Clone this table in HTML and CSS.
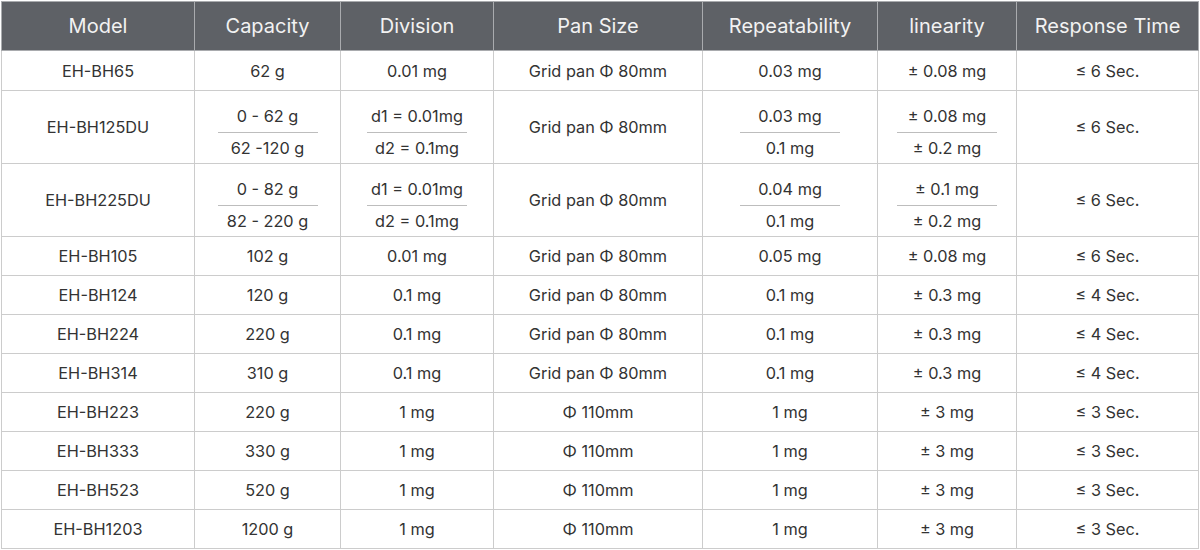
FILE: index.html
```html
<!DOCTYPE html>
<html>
<head>
<meta charset="utf-8">
<link rel="stylesheet" href="styles.css">
</head>
<body>
<table class="spec">
  <colgroup>
    <col class="c1"><col class="c2"><col class="c3"><col class="c4"><col class="c5"><col class="c6"><col class="c7">
  </colgroup>
  <thead>
    <tr><th>Model</th><th>Capacity</th><th>Division</th><th>Pan Size</th><th>Repeatability</th><th>linearity</th><th>Response Time</th></tr>
  </thead>
  <tbody>
    <tr class="r40"><td>EH-BH65</td><td>62 g</td><td>0.01 mg</td><td>Grid pan Φ 80mm</td><td>0.03 mg</td><td>± 0.08 mg</td><td>≤ 6 Sec.</td></tr>
    <tr class="r73">
      <td>EH-BH125DU</td>
      <td><div class="frac"><span class="top">0 - 62 g</span><span class="bot">62 -120 g</span></div></td>
      <td><div class="frac"><span class="top">d1 = 0.01mg</span><span class="bot">d2 = 0.1mg</span></div></td>
      <td>Grid pan Φ 80mm</td>
      <td><div class="frac"><span class="top">0.03 mg</span><span class="bot">0.1 mg</span></div></td>
      <td><div class="frac"><span class="top">± 0.08 mg</span><span class="bot">± 0.2 mg</span></div></td>
      <td>≤ 6 Sec.</td>
    </tr>
    <tr class="r73">
      <td>EH-BH225DU</td>
      <td><div class="frac"><span class="top">0 - 82 g</span><span class="bot">82 - 220 g</span></div></td>
      <td><div class="frac"><span class="top">d1 = 0.01mg</span><span class="bot">d2 = 0.1mg</span></div></td>
      <td>Grid pan Φ 80mm</td>
      <td><div class="frac"><span class="top">0.04 mg</span><span class="bot">0.1 mg</span></div></td>
      <td><div class="frac"><span class="top">± 0.1 mg</span><span class="bot">± 0.2 mg</span></div></td>
      <td>≤ 6 Sec.</td>
    </tr>
    <tr><td>EH-BH105</td><td>102 g</td><td>0.01 mg</td><td>Grid pan Φ 80mm</td><td>0.05 mg</td><td>± 0.08 mg</td><td>≤ 6 Sec.</td></tr>
    <tr><td>EH-BH124</td><td>120 g</td><td>0.1 mg</td><td>Grid pan Φ 80mm</td><td>0.1 mg</td><td>± 0.3 mg</td><td>≤ 4 Sec.</td></tr>
    <tr><td>EH-BH224</td><td>220 g</td><td>0.1 mg</td><td>Grid pan Φ 80mm</td><td>0.1 mg</td><td>± 0.3 mg</td><td>≤ 4 Sec.</td></tr>
    <tr><td>EH-BH314</td><td>310 g</td><td>0.1 mg</td><td>Grid pan Φ 80mm</td><td>0.1 mg</td><td>± 0.3 mg</td><td>≤ 4 Sec.</td></tr>
    <tr><td>EH-BH223</td><td>220 g</td><td>1 mg</td><td>Φ 110mm</td><td>1 mg</td><td>± 3 mg</td><td>≤ 3 Sec.</td></tr>
    <tr><td>EH-BH333</td><td>330 g</td><td>1 mg</td><td>Φ 110mm</td><td>1 mg</td><td>± 3 mg</td><td>≤ 3 Sec.</td></tr>
    <tr><td>EH-BH523</td><td>520 g</td><td>1 mg</td><td>Φ 110mm</td><td>1 mg</td><td>± 3 mg</td><td>≤ 3 Sec.</td></tr>
    <tr><td>EH-BH1203</td><td>1200 g</td><td>1 mg</td><td>Φ 110mm</td><td>1 mg</td><td>± 3 mg</td><td>≤ 3 Sec.</td></tr>
  </tbody>
</table>
</body>
</html>
```
FILE: styles.css
```css
html, body {
  margin: 0;
  padding: 0;
  background: #ffffff;
}
body {
  padding: 1px 0 0 1px;
  font-family: Inter, "Liberation Sans", sans-serif;
  color: #333333;
}
.spec {
  border-collapse: collapse;
  table-layout: fixed;
  width: 1197px;
}
.c1 { width: 193px; }
.c2 { width: 146px; }
.c3 { width: 153px; }
.c4 { width: 209px; }
.c5 { width: 175px; }
.c6 { width: 139px; }
.c7 { width: 182px; }
.spec th, .spec td {
  border: 1px solid #cccccc;
  text-align: center;
  vertical-align: middle;
  padding: 0;
}
.spec th {
  background: #5e6166;
  color: #f2f2f2;
  font-weight: 400;
  font-size: 20px;
  height: 48px;
  border-color: #a9abae;
}
.spec td {
  font-size: 16.3px;
  height: 38px;
}
.spec tr.r40 td { height: 39px; }
.spec tr.r73 td { height: 72px; }
.frac {
  width: 100px;
  margin: 9px auto 0;
  display: flex;
  flex-direction: column;
}
.frac .top {
  line-height: 20px;
  padding-bottom: 6px;
  border-bottom: 1px solid #bdbdbd;
}
.frac .bot {
  line-height: 20px;
  padding-top: 5px;
}
```
